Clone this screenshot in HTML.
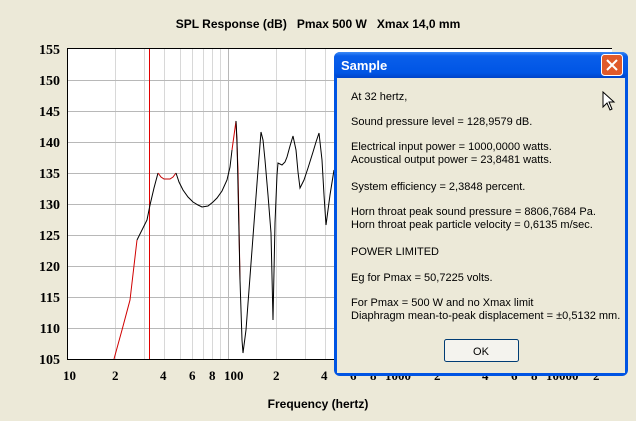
<!DOCTYPE html>
<html><head><meta charset="utf-8"><style>
html,body{margin:0;padding:0;background:#ece9d8;width:636px;height:421px;overflow:hidden}
svg{display:block}
.lab{font-family:"Liberation Serif",serif;font-weight:bold;font-size:14px;fill:#000}
.xl{font-family:"Liberation Serif",serif;font-weight:bold;font-size:13px;fill:#000}
.ttl{font-family:"Liberation Sans",sans-serif;font-weight:bold;font-size:12px;fill:#000}
.dt{font-family:"Liberation Sans",sans-serif;font-size:11px;fill:#000}
</style></head><body>
<svg width="636" height="421" xmlns="http://www.w3.org/2000/svg">
<rect width="636" height="421" fill="#ece9d8"/>
<text class="ttl" x="318" y="28" text-anchor="middle" xml:space="preserve">SPL Response (dB)   Pmax 500 W   Xmax 14,0 mm</text>
<rect x="67" y="49" width="545" height="310" fill="#fff"/>
<g stroke="#d8d8d8" stroke-width="1">
<line x1="115.5" y1="49" x2="115.5" y2="359"/><line x1="144.5" y1="49" x2="144.5" y2="359"/><line x1="164.5" y1="49" x2="164.5" y2="359"/><line x1="180.5" y1="49" x2="180.5" y2="359"/><line x1="192.5" y1="49" x2="192.5" y2="359"/><line x1="203.5" y1="49" x2="203.5" y2="359"/><line x1="212.5" y1="49" x2="212.5" y2="359"/><line x1="220.5" y1="49" x2="220.5" y2="359"/>
<line x1="276.5" y1="49" x2="276.5" y2="359"/><line x1="305.5" y1="49" x2="305.5" y2="359"/><line x1="325.5" y1="49" x2="325.5" y2="359"/>
</g>
<g stroke="#b8b8b8"><line x1="228.5" y1="49" x2="228.5" y2="359"/>
<line x1="67" y1="80.5" x2="612" y2="80.5"/><line x1="67" y1="111.5" x2="612" y2="111.5"/><line x1="67" y1="142.5" x2="612" y2="142.5"/><line x1="67" y1="173.5" x2="612" y2="173.5"/><line x1="67" y1="204.5" x2="612" y2="204.5"/><line x1="67" y1="235.5" x2="612" y2="235.5"/><line x1="67" y1="266.5" x2="612" y2="266.5"/><line x1="67" y1="297.5" x2="612" y2="297.5"/><line x1="67" y1="328.5" x2="612" y2="328.5"/></g>
<path d="M67.5 359.5V48.5H612M67 359.5H612" stroke="#000" fill="none"/>
<rect x="149" y="49" width="1" height="310" fill="#e00000"/>
<polyline fill="none" stroke="#d00000" points="114,359 122,330 130,300 137,240"/>
<polyline fill="none" stroke="#000" points="137,240 147,220 150,205 154,188 158,173"/>
<polyline fill="none" stroke="#c00000" points="158,173 161,177 164,179 170,179 173,177 176,173"/>
<polyline fill="none" stroke="#000" points="176,173 179,182 183,190 188,197 193,202 198,205 202,207 208,206 213,202 217,198 222,191 227,180 230,167 232,150"/>
<polyline fill="none" stroke="#d00000" points="232,150 236,121 238,170 240,280"/>
<polyline fill="none" stroke="#000" points="236,121 237,140 240,280 242,340 243,353 246,330 249,290 252,250 255,210 258,170 261,132 263,140 265,160 268,195 271,233 273,320 275,223 277,175 278,163 282,165 285,162 287,157 290,146 293,136 296,150 298,172 300,188 304,180 308,168 313,152 316,142 319,133 322,160 324,195 326,225 330,195 334,170"/>
<g class="lab" text-anchor="end">
<text x="60" y="54">155</text><text x="60" y="85">150</text><text x="60" y="116">145</text><text x="60" y="147">140</text><text x="60" y="178">135</text><text x="60" y="209">130</text><text x="60" y="240">125</text><text x="60" y="271">120</text><text x="60" y="302">115</text><text x="60" y="333">110</text><text x="60" y="364">105</text>
</g>
<g class="xl">
<text x="63" y="380">10</text><text x="112" y="380">2</text><text x="160" y="380">4</text><text x="189" y="380">6</text><text x="209" y="380">8</text><text x="224" y="380">100</text><text x="273" y="380">2</text><text x="321" y="380">4</text><text x="350" y="380">6</text><text x="370" y="380">8</text><text x="385" y="380">1000</text><text x="434" y="380">2</text><text x="482" y="380">4</text><text x="511" y="380">6</text><text x="531" y="380">8</text><text x="546" y="380">10000</text><text x="593" y="380">2</text>
</g>
<text class="ttl" x="318" y="408" text-anchor="middle">Frequency (hertz)</text>
<defs><linearGradient id="tb" x1="0" y1="0" x2="0" y2="1"><stop offset="0" stop-color="#3d8af7"/><stop offset=".15" stop-color="#0a5fea"/><stop offset=".8" stop-color="#0055e5"/><stop offset="1" stop-color="#0043c8"/></linearGradient></defs>
<rect x="334" y="52" width="294" height="324" rx="6" fill="#0054e3"/>
<rect x="334" y="52" width="294" height="26" rx="6" fill="url(#tb)"/>
<rect x="337" y="78" width="288" height="295" fill="#ece9d8"/>
<text x="341" y="70" font-family="Liberation Sans,sans-serif" font-weight="bold" font-size="13" fill="#fff">Sample</text>
<rect x="601.5" y="54.5" width="21" height="21" rx="3" fill="#e05a2a" stroke="#fff"/>
<path d="M607 60L617 70M617 60L607 70" stroke="#fff" stroke-width="2"/>
<path d="M603 92V107L607 103L610 110L612 109L609 102L614 102Z" fill="#fff" stroke="#000"/>
<g class="dt">
<text x="351" y="100">At 32 hertz,</text>
<text x="351" y="125">Sound pressure level = 128,9579 dB.</text>
<text x="351" y="150">Electrical input power = 1000,0000 watts.</text>
<text x="351" y="163">Acoustical output power = 23,8481 watts.</text>
<text x="351" y="190">System efficiency = 2,3848 percent.</text>
<text x="351" y="215">Horn throat peak sound pressure = 8806,7684 Pa.</text>
<text x="351" y="228">Horn throat peak particle velocity = 0,6135 m/sec.</text>
<text x="351" y="255">POWER LIMITED</text>
<text x="351" y="281">Eg for Pmax = 50,7225 volts.</text>
<text x="351" y="306">For Pmax = 500 W and no Xmax limit</text>
<text x="351" y="319">Diaphragm mean-to-peak displacement = ±0,5132 mm.</text>
</g>
<rect x="444.5" y="339.5" width="74" height="22" rx="2" fill="#f4f3ee" stroke="#003c74"/>
<text class="dt" x="481" y="355" text-anchor="middle">OK</text>
</svg>
</body></html>
